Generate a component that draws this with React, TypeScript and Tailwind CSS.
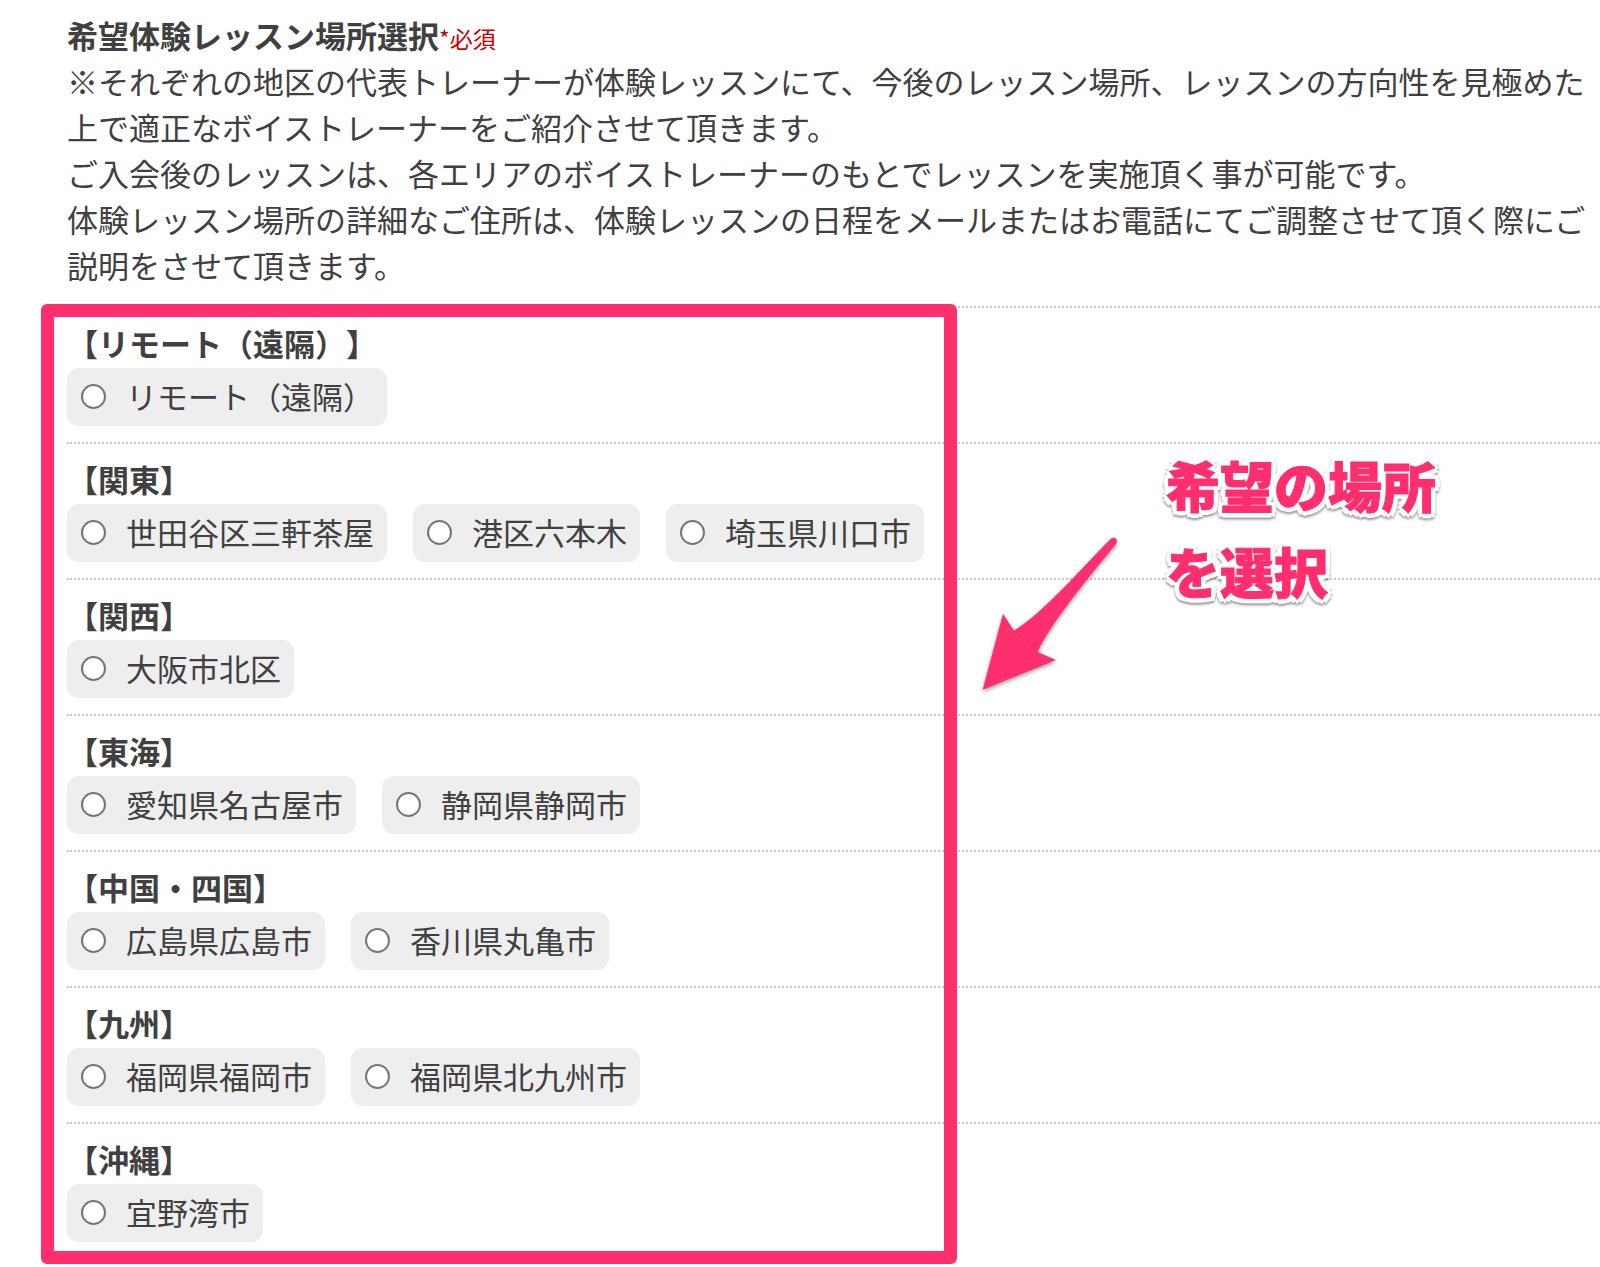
type Area = {
  name: string;
  places: string[];
};

const areas: Area[] = [
  { name: "リモート（遠隔）", places: ["リモート（遠隔）"] },
  { name: "関東", places: ["世田谷区三軒茶屋", "港区六本木", "埼玉県川口市"] },
  { name: "関西", places: ["大阪市北区"] },
  { name: "東海", places: ["愛知県名古屋市", "静岡県静岡市"] },
  { name: "中国・四国", places: ["広島県広島市", "香川県丸亀市"] },
  { name: "九州", places: ["福岡県福岡市", "福岡県北九州市"] },
  { name: "沖縄", places: ["宜野湾市"] },
];

function PlaceOption({ place }: { place: string }) {
  return (
    <label className="flex h-[58px] items-center gap-5 rounded-xl bg-[#eeeeee] pr-[13px] pb-[2px] pl-[14px] cursor-pointer">
      <input
        type="radio"
        name="place"
        value={place}
        className="size-[25px] shrink-0 appearance-none rounded-full border-2 border-[#767676] bg-white checked:border-8 checked:border-[#0075ff]"
      />
      <span>{place}</span>
    </label>
  );
}

function AreaGroup({ area }: { area: Area }) {
  return (
    <section
      role="radiogroup"
      aria-label={area.name}
      className="border-t-2 border-dotted border-[#c8c8c8] pt-3 pb-4"
    >
      <h3 className="pb-[2px] font-bold">【{area.name}】</h3>
      <div className="flex flex-wrap gap-[26px]">
        {area.places.map((place) => (
          <PlaceOption key={place} place={place} />
        ))}
      </div>
    </section>
  );
}

function Arrow() {
  return (
    <svg
      viewBox="60 280 420 480"
      aria-hidden="true"
      className="absolute top-[227px] left-[913px] h-[160px] w-[140px] overflow-visible drop-shadow-[0_2px_2px_rgba(0,0,0,0.4)]"
    >
      <path
        d="M68 750 L129 522 L162 573 C250 520 370 380 452 298 C460 290 473 295 470 307 C468 316 462 320 456 327 C380 420 265 560 233 637 L288 661 Z"
        fill="#ff2e6e"
      />
    </svg>
  );
}

export default function App() {
  return (
    <main
      lang="ja"
      className="min-h-screen bg-white pt-3 pb-2 pl-[67px] font-['Noto_Sans_CJK_JP',sans-serif] text-[31px] leading-[46px] text-[#404040] [text-spacing-trim:space-all]"
    >
      <h2 className="font-bold">
        希望体験レッスン場所選択
        <span className="text-[23px] leading-none font-normal text-[#cc0000]">*必須</span>
      </h2>
      <p>
        ※それぞれの地区の代表トレーナーが体験レッスンにて、今後のレッスン場所、レッスンの方向性を見極めた上で適正なボイストレーナーをご紹介させて頂きます。
        <br />
        ご入会後のレッスンは、各エリアのボイストレーナーのもとでレッスンを実施頂く事が可能です。
        <br />
        体験レッスン場所の詳細なご住所は、体験レッスンの日程をメールまたはお電話にてご調整させて頂く際にご説明をさせて頂きます。
      </p>

      <div className="relative mt-[18px]">
        {areas.map((area) => (
          <AreaGroup key={area.name} area={area} />
        ))}

        {/* Highlight frame and callout */}
        <div className="pointer-events-none absolute -top-[2px] -bottom-[6px] -left-[26px] w-[916px] rounded-md border-[13px] border-[#ff2e6e]" />
        <Arrow />
        <p className="absolute top-[136px] left-[1099px] text-[54px] leading-[86px] font-black whitespace-nowrap text-[#ff2e6e] [-webkit-text-stroke:1px_#ff2e6e] [text-shadow:5px_0_white,-5px_0_white,0_5px_white,0_-5px_white,4px_4px_white,-4px_4px_white,4px_-4px_white,-4px_-4px_white,2px_2px_white,-2px_2px_white,2px_-2px_white,-2px_-2px_white] drop-shadow-[0_2px_1px_rgba(0,0,0,0.4)]">
          希望の場所
          <br />
          を選択
        </p>
      </div>
    </main>
  );
}
